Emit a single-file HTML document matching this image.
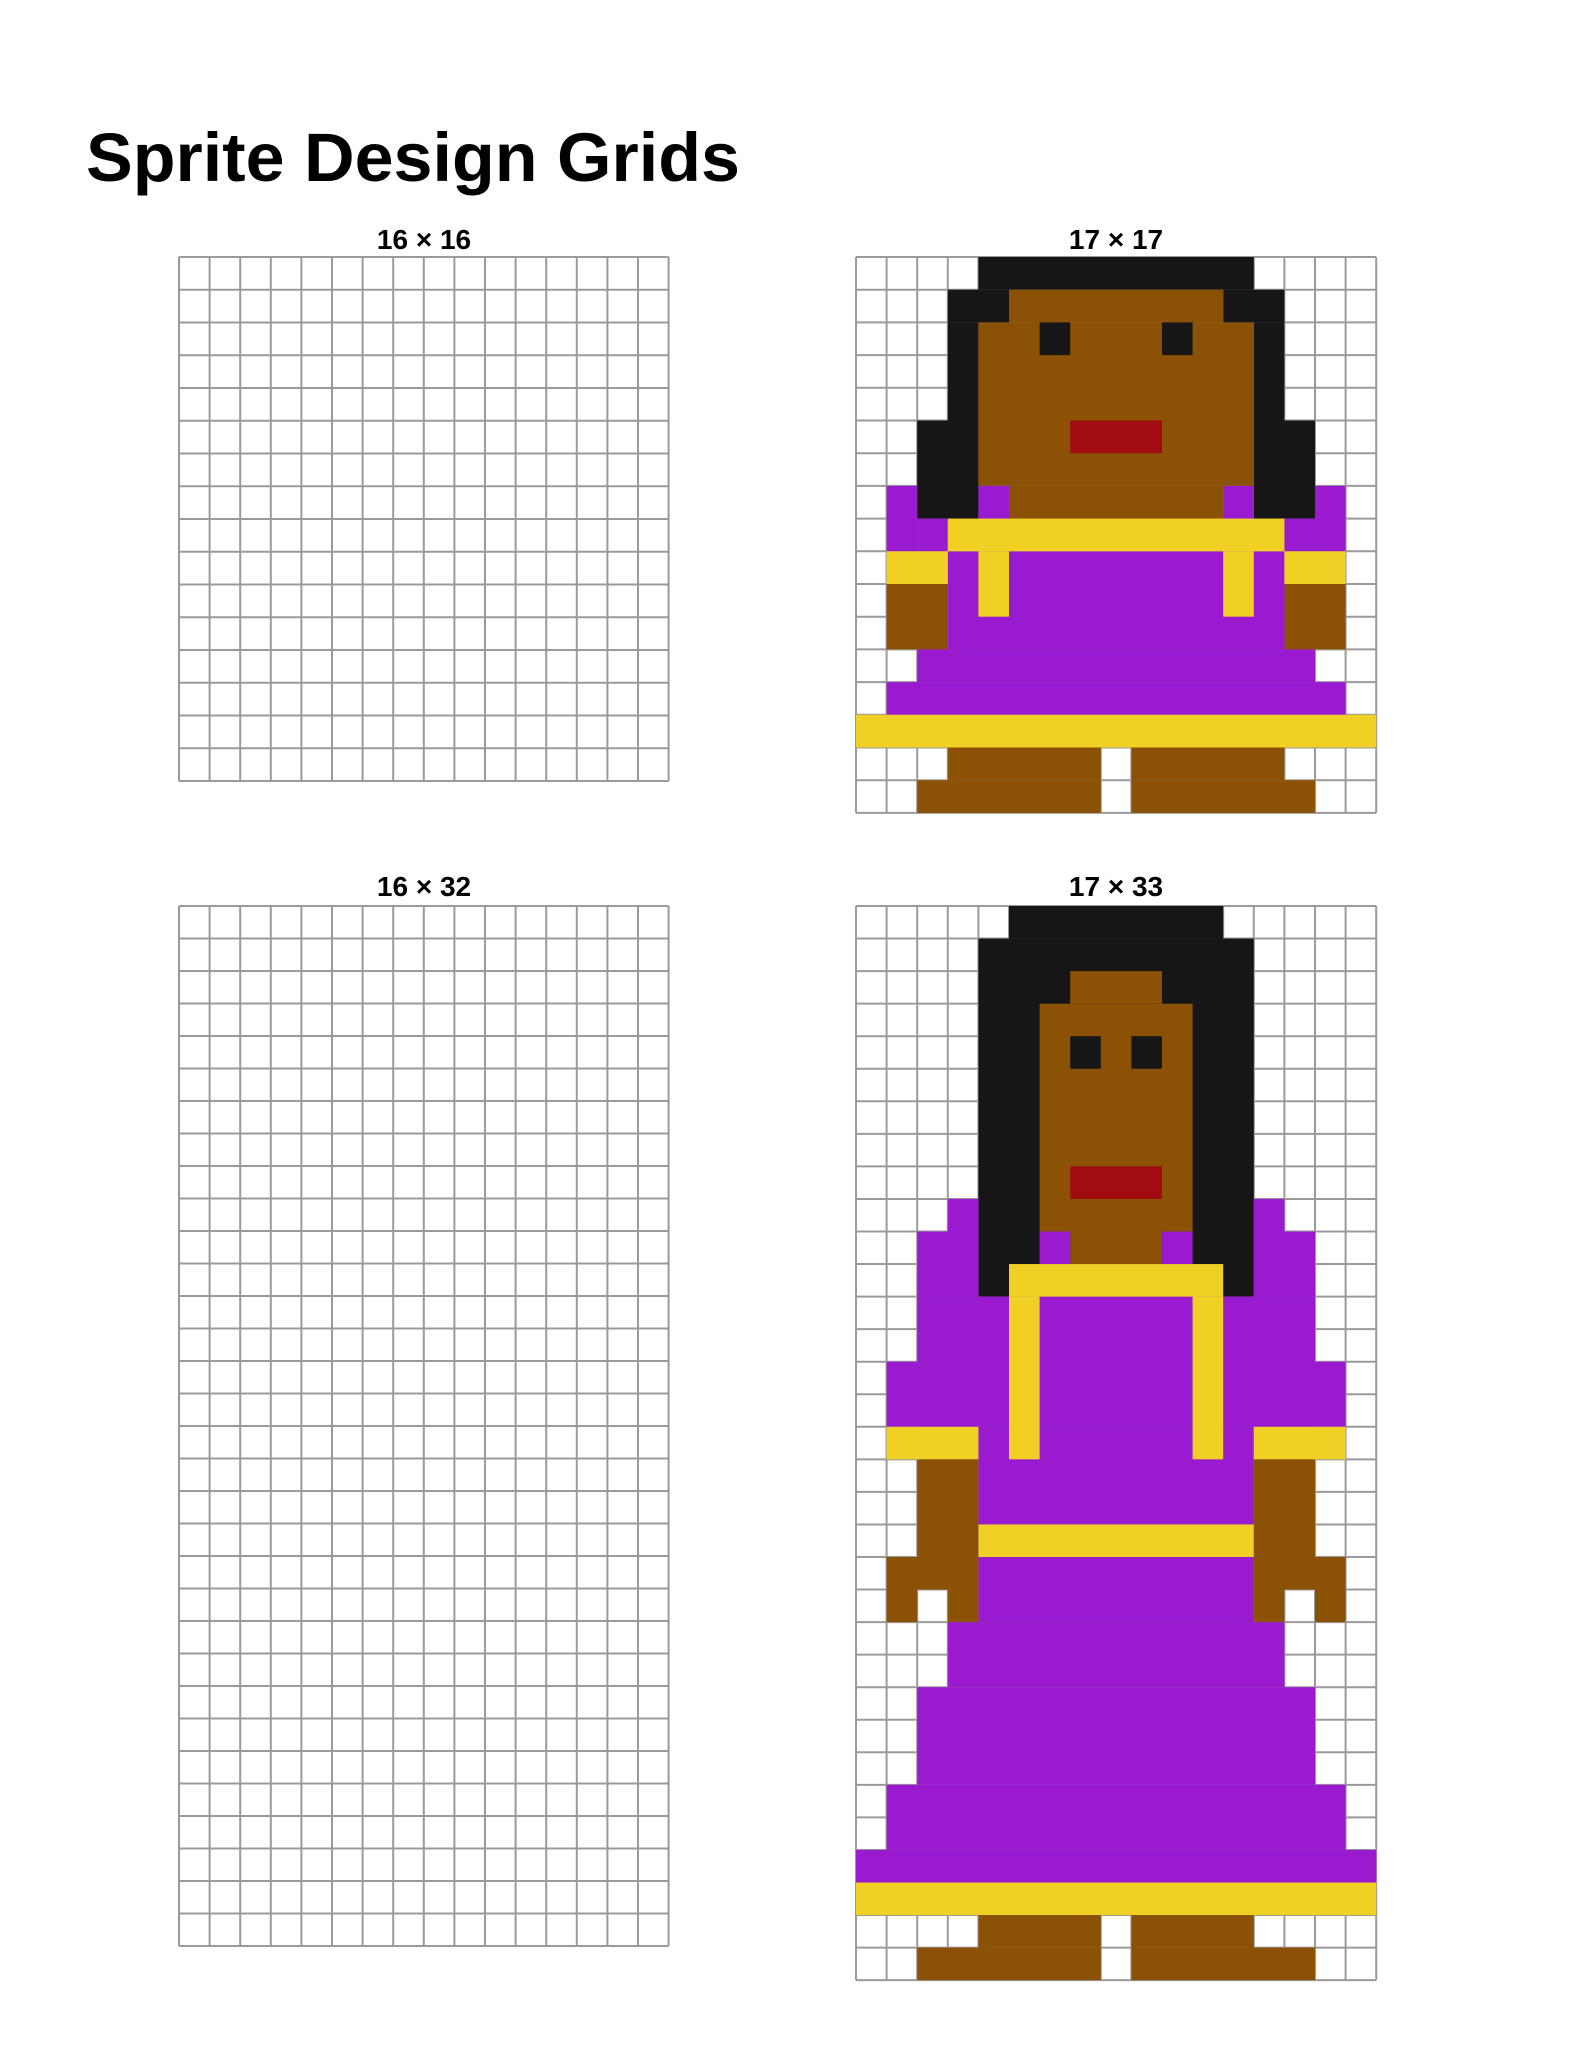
<!DOCTYPE html>
<html><head><meta charset="utf-8"><style>
html,body{margin:0;padding:0;background:#fff}
svg{display:block}
</style></head><body>
<svg width="1582" height="2048" viewBox="0 0 1582 2048" xmlns="http://www.w3.org/2000/svg">
<text x="86" y="181" font-family="Liberation Sans, sans-serif" font-weight="bold" font-size="69" fill="#000" textLength="654" lengthAdjust="spacingAndGlyphs">Sprite Design Grids</text>
<g font-family="Liberation Sans, sans-serif" font-weight="bold" font-size="28" fill="#000" text-anchor="middle">
<text x="424" y="249">16 × 16</text>
<text x="1116" y="249">17 × 17</text>
<text x="424" y="896">16 × 32</text>
<text x="1116" y="896">17 × 33</text>
</g>
<!-- grid 16x16 -->
<g transform="translate(179,257) scale(30.6,32.75)" fill="none" stroke="#9a9a9a" stroke-width="2">
<path vector-effect="non-scaling-stroke" d="M0 0V16M1 0V16M2 0V16M3 0V16M4 0V16M5 0V16M6 0V16M7 0V16M8 0V16M9 0V16M10 0V16M11 0V16M12 0V16M13 0V16M14 0V16M15 0V16M16 0V16M0 0H16M0 1H16M0 2H16M0 3H16M0 4H16M0 5H16M0 6H16M0 7H16M0 8H16M0 9H16M0 10H16M0 11H16M0 12H16M0 13H16M0 14H16M0 15H16M0 16H16"/>
</g>
<!-- grid 16x32 -->
<g transform="translate(179,906) scale(30.6,32.5)" fill="none" stroke="#9a9a9a" stroke-width="2">
<path vector-effect="non-scaling-stroke" d="M0 0V32M1 0V32M2 0V32M3 0V32M4 0V32M5 0V32M6 0V32M7 0V32M8 0V32M9 0V32M10 0V32M11 0V32M12 0V32M13 0V32M14 0V32M15 0V32M16 0V32M0 0H16M0 1H16M0 2H16M0 3H16M0 4H16M0 5H16M0 6H16M0 7H16M0 8H16M0 9H16M0 10H16M0 11H16M0 12H16M0 13H16M0 14H16M0 15H16M0 16H16M0 17H16M0 18H16M0 19H16M0 20H16M0 21H16M0 22H16M0 23H16M0 24H16M0 25H16M0 26H16M0 27H16M0 28H16M0 29H16M0 30H16M0 31H16M0 32H16"/>
</g>
<!-- grid 17x17 -->
<g transform="translate(856,257) scale(30.6,32.7)">
<path fill="none" stroke="#9a9a9a" stroke-width="2" vector-effect="non-scaling-stroke" d="M0 0V17M1 0V17M2 0V17M3 0V17M4 0V17M5 0V17M6 0V17M7 0V17M8 0V17M9 0V17M10 0V17M11 0V17M12 0V17M13 0V17M14 0V17M15 0V17M16 0V17M17 0V17M0 0H17M0 1H17M0 2H17M0 3H17M0 4H17M0 5H17M0 6H17M0 7H17M0 8H17M0 9H17M0 10H17M0 11H17M0 12H17M0 13H17M0 14H17M0 15H17M0 16H17M0 17H17"/>
<g fill="#161616">
<rect x="4" y="0" width="9" height="1"/><rect x="3" y="1" width="2" height="1"/><rect x="12" y="1" width="2" height="1"/>
<rect x="3" y="2" width="1" height="3"/><rect x="13" y="2" width="1" height="3"/>
<rect x="2" y="5" width="2" height="3"/><rect x="13" y="5" width="2" height="3"/>
</g>
<g fill="#8b5206">
<rect x="5" y="1" width="7" height="1"/><rect x="4" y="2" width="9" height="5"/><rect x="5" y="7" width="7" height="1"/>
<rect x="1" y="10" width="2" height="2"/><rect x="14" y="10" width="2" height="2"/>
<rect x="3" y="15" width="5" height="1"/><rect x="9" y="15" width="5" height="1"/>
<rect x="2" y="16" width="6" height="1"/><rect x="9" y="16" width="6" height="1"/>
</g>
<g fill="#161616"><rect x="6" y="2" width="1" height="1"/><rect x="10" y="2" width="1" height="1"/></g>
<rect x="7" y="5" width="3" height="1" fill="#a00c12"/>
<g fill="#9a1bcf">
<rect x="1" y="7" width="1" height="2"/><rect x="2" y="8" width="1" height="1"/><rect x="14" y="8" width="1" height="1"/><rect x="15" y="7" width="1" height="2"/>
<rect x="4" y="7" width="1" height="1"/><rect x="12" y="7" width="1" height="1"/>
<rect x="3" y="9" width="11" height="3"/><rect x="2" y="12" width="13" height="1"/><rect x="1" y="13" width="15" height="1"/>
</g>
<g fill="#f0d024">
<rect x="3" y="8" width="11" height="1"/><rect x="1" y="9" width="2" height="1"/><rect x="14" y="9" width="2" height="1"/>
<rect x="4" y="9" width="1" height="2"/><rect x="12" y="9" width="1" height="2"/><rect x="0" y="14" width="17" height="1"/>
</g>
</g>
<!-- grid 17x33 -->
<g transform="translate(856,906) scale(30.6,32.55)">
<path fill="none" stroke="#9a9a9a" stroke-width="2" vector-effect="non-scaling-stroke" d="M0 0V33M1 0V33M2 0V33M3 0V33M4 0V33M5 0V33M6 0V33M7 0V33M8 0V33M9 0V33M10 0V33M11 0V33M12 0V33M13 0V33M14 0V33M15 0V33M16 0V33M17 0V33M0 0H17M0 1H17M0 2H17M0 3H17M0 4H17M0 5H17M0 6H17M0 7H17M0 8H17M0 9H17M0 10H17M0 11H17M0 12H17M0 13H17M0 14H17M0 15H17M0 16H17M0 17H17M0 18H17M0 19H17M0 20H17M0 21H17M0 22H17M0 23H17M0 24H17M0 25H17M0 26H17M0 27H17M0 28H17M0 29H17M0 30H17M0 31H17M0 32H17M0 33H17"/>
<g fill="#161616"><rect x="5" y="0" width="7" height="1"/><rect x="4" y="1" width="9" height="11"/></g>
<g fill="#8b5206"><rect x="7" y="2" width="3" height="1"/><rect x="6" y="3" width="5" height="7"/><rect x="7" y="10" width="3" height="1"/></g>
<g fill="#161616"><rect x="7" y="4" width="1" height="1"/><rect x="9" y="4" width="1" height="1"/></g>
<rect x="7" y="8" width="3" height="1" fill="#a00c12"/>
<g fill="#9a1bcf">
<rect x="6" y="10" width="1" height="1"/><rect x="10" y="10" width="1" height="1"/>
<rect x="3" y="9" width="1" height="1"/><rect x="13" y="9" width="1" height="1"/>
<rect x="2" y="10" width="2" height="2"/><rect x="13" y="10" width="2" height="2"/>
<rect x="2" y="12" width="13" height="4"/><rect x="1" y="14" width="15" height="2"/>
<rect x="4" y="16" width="9" height="3"/><rect x="4" y="20" width="9" height="2"/>
<rect x="3" y="22" width="11" height="2"/><rect x="2" y="24" width="13" height="3"/>
<rect x="1" y="27" width="15" height="2"/><rect x="0" y="29" width="17" height="1"/>
</g>
<g fill="#f0d024">
<rect x="5" y="11" width="7" height="1"/><rect x="5" y="12" width="1" height="5"/><rect x="11" y="12" width="1" height="5"/>
<rect x="1" y="16" width="3" height="1"/><rect x="13" y="16" width="3" height="1"/>
<rect x="4" y="19" width="9" height="1"/><rect x="0" y="30" width="17" height="1"/>
</g>
<g fill="#8b5206">
<rect x="2" y="17" width="2" height="3"/><rect x="13" y="17" width="2" height="3"/>
<rect x="1" y="20" width="3" height="1"/><rect x="13" y="20" width="3" height="1"/>
<rect x="1" y="21" width="1" height="1"/><rect x="3" y="21" width="1" height="1"/>
<rect x="13" y="21" width="1" height="1"/><rect x="15" y="21" width="1" height="1"/>
<rect x="4" y="31" width="4" height="1"/><rect x="9" y="31" width="4" height="1"/>
<rect x="2" y="32" width="6" height="1"/><rect x="9" y="32" width="6" height="1"/>
</g>
</g>
</svg>
</body></html>
